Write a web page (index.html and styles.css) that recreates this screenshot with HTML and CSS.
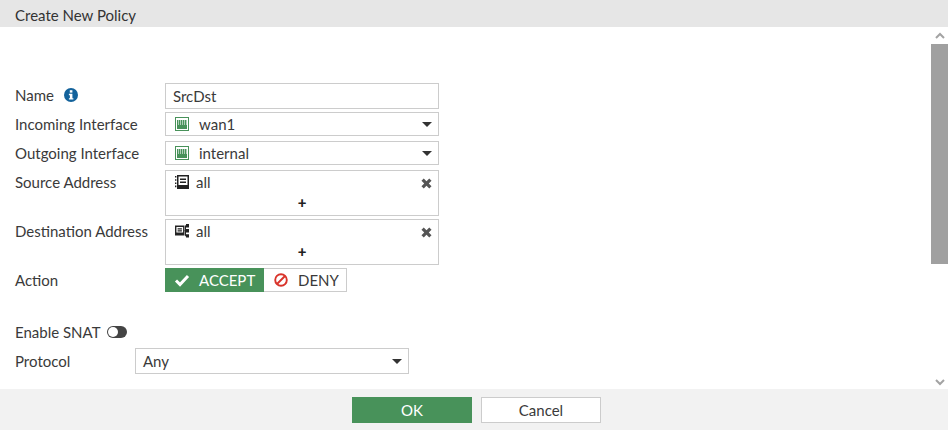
FILE: index.html
```html
<!DOCTYPE html>
<html lang="en">
<head>
    <meta charset="UTF-8">
    <meta name="viewport" content="width=device-width, initial-scale=1.0">
    <title>Create New Policy</title>
    <link rel="stylesheet" href="styles.css">
</head>
<body>
    <div class="dialog">
        <div class="title">Create New Policy</div>

        <div class="middle">
            <form class="policy-form">
                <div class="row row-name">
                    <label>Name
                        <svg class="info" viewBox="0 0 14 14" width="14" height="14">
                            <circle cx="7" cy="7" r="7" fill="#13629b"/>
                            <rect x="5.8" y="2.2" width="2.6" height="2.4" fill="#fff"/>
                            <path d="M4.9 5.8h3.5v4.4h1v1.4H4.9v-1.4h1V7.2h-1z" fill="#fff"/>
                        </svg>
                    </label>
                    <div class="text-box">SrcDst</div>
                </div>

                <div class="row row-select">
                    <label>Incoming Interface</label>
                    <div class="select-box">
                        <svg class="port" viewBox="0 0 14 14" width="14" height="14">
                            <rect x="0.5" y="0.5" width="13" height="13" fill="#fff" stroke="#48925a"/>
                            <path d="M2 3h10v9H2z" fill="#48925a"/>
                            <path d="M3.5 3v5M5.5 3v5M7.5 3v5M9.5 3v5M11.5 3v5" stroke="#fff" stroke-opacity="0.7" stroke-width="0.8"/>
                        </svg>
                        <span class="select-text">wan1</span>
                        <span class="caret"></span>
                    </div>
                </div>

                <div class="row row-select">
                    <label>Outgoing Interface</label>
                    <div class="select-box">
                        <svg class="port" viewBox="0 0 14 14" width="14" height="14">
                            <rect x="0.5" y="0.5" width="13" height="13" fill="#fff" stroke="#48925a"/>
                            <path d="M2 3h10v9H2z" fill="#48925a"/>
                            <path d="M3.5 3v5M5.5 3v5M7.5 3v5M9.5 3v5M11.5 3v5" stroke="#fff" stroke-opacity="0.7" stroke-width="0.8"/>
                        </svg>
                        <span class="select-text">internal</span>
                        <span class="caret"></span>
                    </div>
                </div>

                <div class="row row-address">
                    <label>Source Address</label>
                    <div class="address-box">
                        <div class="address-item">
                            <svg class="addr-icon" viewBox="0 0 14 14" width="14" height="14">
                                <path d="M2 0h12v14H2zM3.5 1.5v8.5h9V1.5z" fill="#222" fill-rule="evenodd"/>
                                <path d="M5 3.5h6v1.4H5zM5 6.5h6v1.4H5z" fill="#222"/>
                                <path d="M0 1h1.4v1.6H0zM0 4.2h1.4v1.6H0zM0 7.4h1.4V9H0zM0 10.6h1.4v1.6H0z" fill="#222"/>
                            </svg>
                            <span>all</span>
                            <svg class="remove" viewBox="0 0 11 11" width="11" height="11">
                                <path d="M1.6 1.6l7.8 7.8M9.4 1.6l-7.8 7.8" stroke="#555" stroke-width="3.2"/>
                            </svg>
                        </div>
                        <div class="add">+</div>
                    </div>
                </div>

                <div class="row row-address">
                    <label>Destination Address</label>
                    <div class="address-box">
                        <div class="address-item">
                            <svg class="addr-icon" viewBox="0 0 14 14" width="14" height="14">
                                <path d="M0 1.5h9.5v10H0zM1.4 3v5.5h6.7V3z" fill="#222" fill-rule="evenodd"/>
                                <path d="M2.6 4.2h4.3v1.2H2.6zM2.6 6.3h4.3v1.2H2.6z" fill="#222"/>
                                <path d="M11 0h3v3.4h-3zM11 5h3v3.4h-3zM11 10.2h3v3.4h-3z" fill="#222"/>
                                <path d="M9.5 6.7h1.5M10.5 1.7v10.2h0.5M10.5 1.7h0.5" stroke="#222" stroke-width="1" fill="none"/>
                            </svg>
                            <span>all</span>
                            <svg class="remove" viewBox="0 0 11 11" width="11" height="11">
                                <path d="M1.6 1.6l7.8 7.8M9.4 1.6l-7.8 7.8" stroke="#555" stroke-width="3.2"/>
                            </svg>
                        </div>
                        <div class="add">+</div>
                    </div>
                </div>

                <div class="row row-action">
                    <label>Action</label>
                    <div class="toggle-group">
                        <div class="toggle on">
                            <svg viewBox="0 0 16 14" width="16" height="14">
                                <path d="M2 7.5l4 4 8-8.5" fill="none" stroke="#fff" stroke-width="3"/>
                            </svg>
                            ACCEPT
                        </div>
                        <div class="toggle off">
                            <svg viewBox="0 0 14 14" width="14" height="14">
                                <circle cx="7" cy="7" r="5.8" fill="none" stroke="#d9342b" stroke-width="1.9"/>
                                <path d="M3 11L11 3" stroke="#d9342b" stroke-width="1.9"/>
                            </svg>
                            DENY
                        </div>
                    </div>
                </div>

                <div class="row row-snat">
                    <label>Enable SNAT</label>
                    <span class="switch"><span class="knob"></span></span>
                </div>

                <div class="row row-protocol">
                    <label>Protocol</label>
                    <div class="select-box protocol-box">
                        <span class="select-text">Any</span>
                        <span class="caret"></span>
                    </div>
                </div>
            </form>

            <div class="scrollbar">
                <svg class="arrow" viewBox="0 0 10 7" width="10" height="7">
                    <path d="M1 6l4-4 4 4" fill="none" stroke="#a3a3a3" stroke-width="2"/>
                </svg>
                <div class="thumb"></div>
                <svg class="arrow arrow-down" viewBox="0 0 10 7" width="10" height="7">
                    <path d="M1 1l4 4 4-4" fill="none" stroke="#a3a3a3" stroke-width="2"/>
                </svg>
            </div>
        </div>

        <div class="footer">
            <button type="button" class="btn btn-ok">OK</button>
            <button type="button" class="btn">Cancel</button>
        </div>
    </div>
</body>
</html>
```

FILE: styles.css
```css
body {
    margin: 0;
    font-family: Lato, "Open Sans", sans-serif;
    font-size: 15px;
    color: #3a3a3a;
    background-color: #fff;
}

.dialog {
    display: flex;
    flex-direction: column;
    height: 430px;
    overflow: hidden;
}

.title {
    height: 27px;
    line-height: 30px;
    padding-left: 15px;
    background-color: #e6e6e6;
    color: #333;
}

.middle {
    display: flex;
    height: 362px;
}

.policy-form {
    flex: 1;
    padding: 56px 0 0 15px;
}

/* rows */
.row {
    display: flex;
    align-items: center;
}

.row label {
    display: flex;
    align-items: center;
    width: 150px;
    flex: none;
}

.row-name {
    height: 26px;
    margin-bottom: 3px;
}

.row-name label {
    margin-top: -2px;
}

.info {
    margin-left: 10px;
}

.text-box {
    width: 265px;
    height: 24px;
    line-height: 25px;
    padding-left: 7px;
    border: 1px solid #ccc;
}

.row-select {
    height: 24px;
    margin-bottom: 5px;
}

.select-box {
    display: flex;
    align-items: center;
    box-sizing: border-box;
    width: 274px;
    height: 24px;
    padding: 0 6px 0 9px;
    border: 1px solid #ccc;
}

.select-text {
    flex: 1;
}

.port {
    margin-right: 10px;
}

.caret {
    width: 0;
    height: 0;
    border-left: 5.5px solid transparent;
    border-right: 5.5px solid transparent;
    border-top: 5px solid #333;
}

/* address lists */
.row-address {
    align-items: flex-start;
    height: 46px;
    margin-bottom: 3px;
}

.row-address label {
    margin-top: 3px;
}

.address-box {
    box-sizing: border-box;
    width: 274px;
    height: 46px;
    border: 1px solid #ccc;
}

.address-item {
    display: flex;
    align-items: center;
    height: 23px;
    padding: 0 6px 2px 9px;
    box-sizing: border-box;
}

.addr-icon {
    margin-right: 7px;
}

.address-item span {
    flex: 1;
}

.remove {
    margin-top: 3px;
}

.add {
    text-align: center;
    font-weight: 900;
    font-size: 15px;
    line-height: 17px;
    color: #222;
}

/* action toggle */
.row-action {
    height: 24px;
}

.toggle-group {
    display: flex;
}

.toggle {
    display: flex;
    align-items: center;
    gap: 9px;
    box-sizing: border-box;
    height: 24px;
    border: 1px solid #ccc;
    border-left: none;
}

.toggle.on {
    width: 99px;
    padding-left: 9px;
    border: none;
    background-color: #48925a;
    color: #fff;
}

.toggle.off {
    width: 83px;
    padding-left: 10px;
    gap: 10px;
}

/* snat switch */
.row-snat {
    height: 24px;
    margin-top: 28px;
}

.row-snat label {
    width: auto;
}

.switch {
    display: block;
    position: relative;
    width: 20px;
    height: 12px;
    margin-left: 6px;
    border-radius: 6px;
    background-color: #444;
}

.knob {
    position: absolute;
    top: 1px;
    left: 1px;
    width: 10px;
    height: 10px;
    border-radius: 50%;
    background-color: #fff;
}

.row-protocol {
    height: 26px;
    margin-top: 4px;
}

.row-protocol label {
    width: 120px;
}

.protocol-box {
    height: 26px;
    padding-left: 7px;
}

/* scrollbar */
.scrollbar {
    display: flex;
    flex-direction: column;
    align-items: center;
    width: 17px;
    flex: none;
}

.arrow {
    margin-top: 5px;
    margin-bottom: 5px;
}

.thumb {
    width: 17px;
    height: 220px;
    background-color: #a0a0a0;
}

.arrow-down {
    margin-top: auto;
    margin-bottom: 3px;
}

/* footer */
.footer {
    display: flex;
    justify-content: center;
    gap: 9px;
    height: 41px;
    padding: 8px 0 0 5px;
    box-sizing: border-box;
    background-color: #f2f2f2;
}

.btn {
    width: 120px;
    height: 26px;
    padding: 0;
    font-family: inherit;
    font-size: 15px;
    color: #3a3a3a;
    background-color: #fff;
    border: 1px solid #ccc;
}

.btn-ok {
    background-color: #48925a;
    border-color: #48925a;
    color: #fff;
}
```
